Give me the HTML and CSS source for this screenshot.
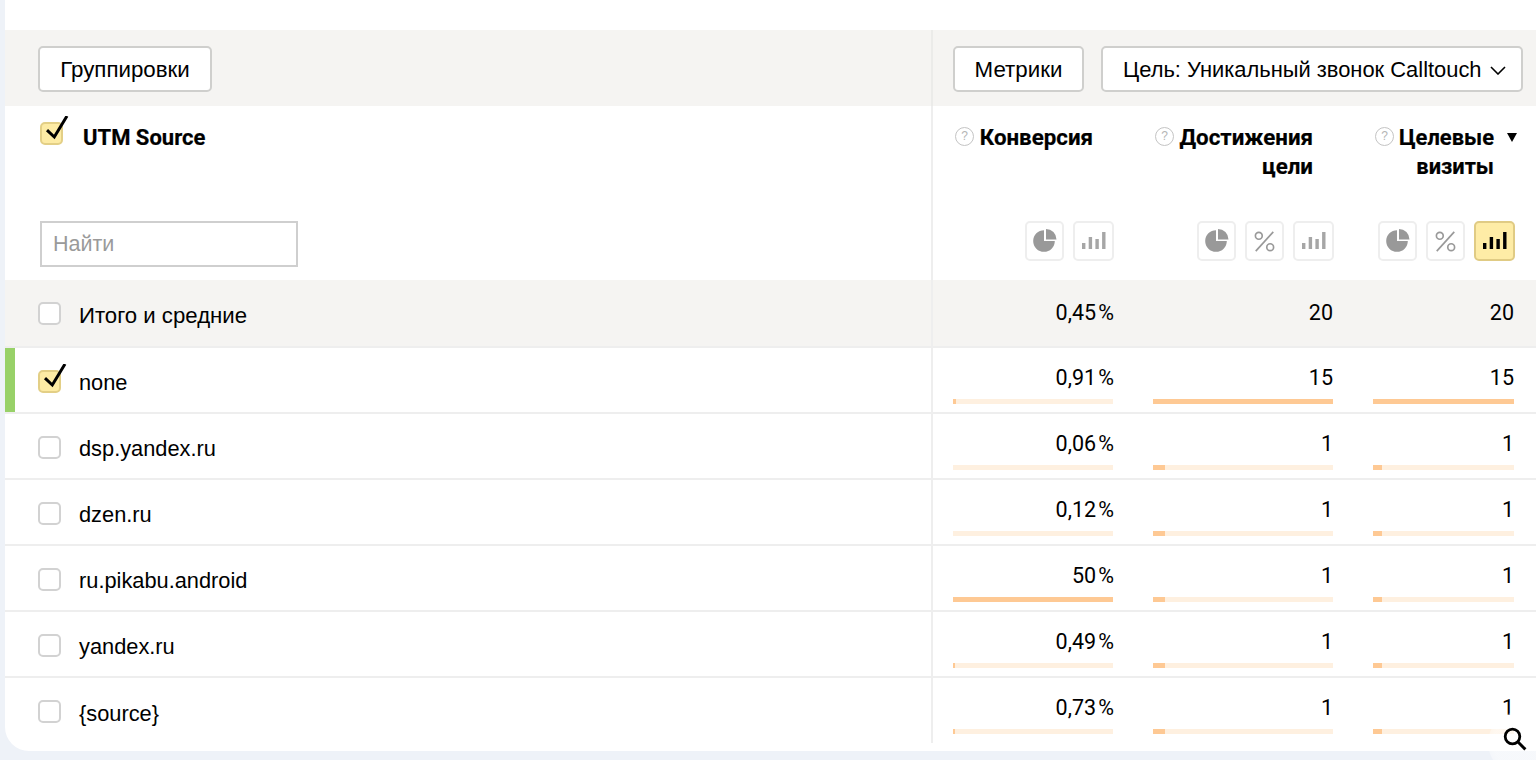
FILE: index.html
```html
<!DOCTYPE html>
<html lang="ru">
  <head>
    <meta charset="UTF-8" />
    <meta name="viewport" content="width=device-width, initial-scale=1.0" />
    <title>UTM Source</title>
    <link rel="stylesheet" href="styles.css">
  </head>
  <body>
    <svg class="sprite" aria-hidden="true">
      <symbol id="pie" viewBox="0 0 24 24">
        <path d="M11 1.2V12h10.8A10.8 10.8 0 1 1 11 1.2z" fill="currentColor" />
        <path d="M13 0a10.5 10.5 0 0 1 10.5 10.5H13z" fill="currentColor" />
      </symbol>
      <symbol id="percent" viewBox="0 0 24 24">
        <circle cx="5.5" cy="5.5" r="3.9" fill="none" stroke="currentColor" stroke-width="1.9" />
        <circle cx="18.5" cy="18.5" r="3.9" fill="none" stroke="currentColor" stroke-width="1.9" />
        <path d="M22 1 2 23" fill="none" stroke="currentColor" stroke-width="1.9" />
      </symbol>
      <symbol id="bars" viewBox="0 0 24 18">
        <rect x="0" y="11" width="3.4" height="6" fill="currentColor" />
        <rect x="6.7" y="5" width="3.4" height="12" fill="currentColor" />
        <rect x="13.4" y="7" width="3.4" height="10" fill="currentColor" />
        <rect x="20.1" y="0" width="3.4" height="17" fill="currentColor" />
      </symbol>
      <symbol id="check" viewBox="0 0 30 30">
        <path d="M7 14.2l7.3 6.8L27 0" fill="none" stroke="currentColor" stroke-width="3" />
      </symbol>
    </svg>

    <div class="report">
      <div class="toolbar">
        <div class="toolbar-left">
          <button class="btn btn-wide">Группировки</button>
        </div>
        <div class="toolbar-right">
          <button class="btn btn-metrics">Метрики</button>
          <button class="btn btn-select">
            Цель: Уникальный звонок Calltouch
            <svg class="chevron" viewBox="0 0 16 9"><path d="M1 1l7 7 7-7" fill="none" stroke="currentColor" stroke-width="1.6" /></svg>
          </button>
        </div>
      </div>

      <div class="row head">
        <div class="name-head">
          <div class="name-title">
            <span class="box checked"><svg class="tick"><use href="#check" /></svg></span>
            <b class="title">UTM Source</b>
          </div>
          <input class="search" type="text" placeholder="Найти" />
        </div>
        <div class="cell metric-head">
          <div class="metric-title">
            <span class="help">?</span>
            <b class="title">Конверсия</b>
          </div>
          <div class="charts">
            <span class="chart"><svg class="icon-pie"><use href="#pie" /></svg></span>
            <span class="chart chart-bars"><svg class="icon-bars"><use href="#bars" /></svg></span>
          </div>
        </div>
        <div class="cell metric-head">
          <div class="metric-title">
            <span class="help">?</span>
            <b class="title">Достижения цели</b>
          </div>
          <div class="charts">
            <span class="chart"><svg class="icon-pie"><use href="#pie" /></svg></span>
            <span class="chart"><svg class="icon-percent"><use href="#percent" /></svg></span>
            <span class="chart chart-bars"><svg class="icon-bars"><use href="#bars" /></svg></span>
          </div>
        </div>
        <div class="cell metric-head">
          <div class="metric-title">
            <span class="help">?</span>
            <b class="title title-short">Целевые визиты</b>
            <svg class="sort" viewBox="0 0 10 9"><path d="M0 0h10L5 9z" fill="currentColor" /></svg>
          </div>
          <div class="charts">
            <span class="chart"><svg class="icon-pie"><use href="#pie" /></svg></span>
            <span class="chart"><svg class="icon-percent"><use href="#percent" /></svg></span>
            <span class="chart chart-bars active"><svg class="icon-bars"><use href="#bars" /></svg></span>
          </div>
        </div>
      </div>

      <div class="row total">
        <div class="name"><span class="box"></span><span class="label">Итого и средние</span></div>
        <div class="cell"><div class="value">0,45&#8202;%</div></div>
        <div class="cell"><div class="value">20</div></div>
        <div class="cell"><div class="value">20</div></div>
      </div>

      <div class="row">
        <div class="name marked"><span class="box checked"><svg class="tick"><use href="#check" /></svg></span><span class="label">none</span></div>
        <div class="cell"><div class="value">0,91&#8202;%</div><div class="bar"><i style="width: 1.8%"></i></div></div>
        <div class="cell"><div class="value">15</div><div class="bar"><i style="width: 100%"></i></div></div>
        <div class="cell"><div class="value">15</div><div class="bar"><i style="width: 100%"></i></div></div>
      </div>
      <div class="row">
        <div class="name"><span class="box"></span><span class="label">dsp.yandex.ru</span></div>
        <div class="cell"><div class="value">0,06&#8202;%</div><div class="bar"><i style="width: 0"></i></div></div>
        <div class="cell"><div class="value">1</div><div class="bar"><i style="width: 6.67%"></i></div></div>
        <div class="cell"><div class="value">1</div><div class="bar"><i style="width: 6.67%"></i></div></div>
      </div>
      <div class="row">
        <div class="name"><span class="box"></span><span class="label">dzen.ru</span></div>
        <div class="cell"><div class="value">0,12&#8202;%</div><div class="bar"><i style="width: 0"></i></div></div>
        <div class="cell"><div class="value">1</div><div class="bar"><i style="width: 6.67%"></i></div></div>
        <div class="cell"><div class="value">1</div><div class="bar"><i style="width: 6.67%"></i></div></div>
      </div>
      <div class="row">
        <div class="name"><span class="box"></span><span class="label">ru.pikabu.android</span></div>
        <div class="cell"><div class="value">50&#8202;%</div><div class="bar"><i style="width: 100%"></i></div></div>
        <div class="cell"><div class="value">1</div><div class="bar"><i style="width: 6.67%"></i></div></div>
        <div class="cell"><div class="value">1</div><div class="bar"><i style="width: 6.67%"></i></div></div>
      </div>
      <div class="row">
        <div class="name"><span class="box"></span><span class="label">yandex.ru</span></div>
        <div class="cell"><div class="value">0,49&#8202;%</div><div class="bar"><i style="width: 0.98%"></i></div></div>
        <div class="cell"><div class="value">1</div><div class="bar"><i style="width: 6.67%"></i></div></div>
        <div class="cell"><div class="value">1</div><div class="bar"><i style="width: 6.67%"></i></div></div>
      </div>
      <div class="row last">
        <div class="name"><span class="box"></span><span class="label">{source}</span></div>
        <div class="cell"><div class="value">0,73&#8202;%</div><div class="bar"><i style="width: 1.46%"></i></div></div>
        <div class="cell"><div class="value">1</div><div class="bar"><i style="width: 6.67%"></i></div></div>
        <div class="cell"><div class="value">1</div><div class="bar"><i style="width: 6.67%"></i></div></div>
      </div>
    </div>

    <div class="zoom-glow"></div>
    <svg class="zoom-icon" viewBox="0 0 24 24">
      <circle cx="9.5" cy="9.5" r="7.3" fill="none" stroke="currentColor" stroke-width="2.8" />
      <path d="M14.8 14.8l7.6 7.6" fill="none" stroke="currentColor" stroke-width="3" />
    </svg>
  </body>
</html>
```

FILE: styles.css
```css
* {
  box-sizing: border-box;
}

body {
  margin: 0;
  height: 760px;
  overflow: hidden;
  position: relative;
  background-color: #eef2f8;
  color: #000;
  font-family: "Liberation Sans", Arial, sans-serif;
  font-size: 22px;
}

.sprite {
  display: none;
}

.report {
  margin-left: 5px;
  height: 751px;
  padding-top: 30px;
  background-color: #fff;
  border-bottom-left-radius: 24px;
}

/* toolbar */
.toolbar {
  display: grid;
  grid-template-columns: 928px 1fr;
  height: 76px;
  background-color: #f5f4f2;
}

.toolbar-left {
  display: flex;
  align-items: center;
  padding: 2px 0 0 33px;
  border-right: 2px solid #ebebe9;
}

.toolbar-right {
  display: flex;
  align-items: center;
  gap: 17px;
  padding: 2px 0 0 20px;
}

.btn {
  height: 46px;
  padding: 2px 20px 0;
  background-color: #fff;
  border: 2px solid #cfcfcd;
  border-radius: 5px;
  color: #000;
  font-family: inherit;
  font-size: 22.3px;
  white-space: nowrap;
}

.btn-wide {
  width: 174px;
}

.btn-metrics {
  width: 131px;
  padding: 2px 0 0;
}

.btn-select {
  display: flex;
  align-items: center;
  gap: 8px;
  width: 422px;
  padding-right: 0;
  font-size: 21.9px;
}

.chevron {
  flex: none;
  width: 16px;
  height: 9px;
}

/* rows */
.row {
  display: grid;
  grid-template-columns: 928px 220px 220px 163px;
  height: 66px;
  border-bottom: 2px solid #eeeeee;
}

.row.last {
  height: 65px;
  border-bottom: 0;
}

.row.total {
  height: 68px;
  background-color: #f5f4f2;
}

.row.head {
  height: 174px;
  border-bottom: 0;
}

.name {
  display: flex;
  align-items: center;
  gap: 18px;
  padding: 2px 0 0 33px;
  border-right: 2px solid #eeeeee;
}

.total .name {
  padding-top: 0;
}

.marked {
  box-shadow: inset 10px 0 0 #98d168;
}

.label {
  font-size: 21.8px;
  position: relative;
  top: 2px;
}

.total .label {
  top: 3px;
  font-size: 22.2px;
}

.box {
  position: relative;
  flex: none;
  width: 23px;
  height: 23px;
  background-color: #fff;
  border: 2px solid #d2d2d2;
  border-radius: 5px;
}

.box.checked {
  background-color: #fdeba4;
  border-color: #e3cf86;
}

.tick {
  position: absolute;
  left: -2px;
  top: -2px;
  width: 30px;
  height: 30px;
  margin-top: -6px;
  overflow: visible;
  color: #000;
}

.cell {
  padding: 15px 40px 0 20px;
  font-family: "Roboto", sans-serif;
}

.cell + .cell {
  padding-left: 0;
}

.cell:last-child {
  padding-right: 22px;
}

.total .cell {
  padding-top: 18px;
}

.value {
  height: 29px;
  line-height: 29px;
  text-align: right;
  font-size: 21.5px;
}

.name + .cell .value {
  margin-right: -1px;
}

.bar {
  height: 5px;
  margin-top: 7px;
  background-color: #fef0e0;
}

.bar i {
  display: block;
  height: 5px;
  background-color: #fec994;
}

/* table head */
.name-head {
  display: flex;
  flex-direction: column;
  justify-content: space-between;
  padding: 16px 0 13px 35px;
  border-right: 2px solid #eeeeee;
}

.name-title {
  display: flex;
  gap: 20px;
}

.name-title .title {
  margin-top: 1px;
  font-size: 22px;
}

.search {
  width: 258px;
  height: 46px;
  padding: 0 11px;
  border: 2px solid #cfcfcf;
  border-radius: 0;
  font-family: inherit;
  font-size: 21.5px;
}

.search::placeholder {
  color: #9a9a9a;
}

.metric-head {
  display: flex;
  flex-direction: column;
  justify-content: space-between;
  padding-top: 17px;
  padding-bottom: 19px;
}

.metric-title {
  display: flex;
  align-items: flex-start;
}

.title {
  font-family: "Roboto", sans-serif;
  font-size: 22.3px;
  font-weight: 700;
  line-height: 29px;
  -webkit-text-stroke: 0.2px #000;
}

.metric-title .title {
  flex: 1;
  margin-right: 20px;
  text-align: right;
}

.metric-title .title-short {
  margin-right: 0;
  padding-left: 4px;
  font-size: 21.9px;
}

.help {
  flex: none;
  width: 19px;
  height: 19px;
  margin: 4px 0 0 2px;
  border: 1.5px solid #c4c4c4;
  border-radius: 50%;
  color: #b5b5b5;
  font-family: "Liberation Sans", sans-serif;
  font-size: 12px;
  line-height: 16px;
  text-align: center;
}

.sort {
  flex: none;
  width: 10px;
  height: 9px;
  margin: 10px -3px 0 13px;
}

.charts {
  display: flex;
  justify-content: flex-end;
  gap: 9px;
  margin-right: -1px;
}

.chart {
  display: flex;
  align-items: center;
  justify-content: center;
  width: 39px;
  height: 40px;
  border: 2px solid #eeeeee;
  border-radius: 5px;
  color: #999;
}

.chart-bars {
  width: 41px;
  padding-left: 1px;
  color: #a6a6a6;
}

.chart.active {
  background-color: #feeca6;
  border-color: #e0cb84;
  color: #000;
}

.icon-pie {
  width: 24px;
  height: 24px;
}

.icon-percent {
  width: 21px;
  height: 21px;
}

.icon-bars {
  width: 24px;
  height: 18px;
}

/* magnifier cursor over the corner */
.zoom-glow {
  position: absolute;
  left: 1488px;
  top: 712px;
  width: 62px;
  height: 62px;
  border-radius: 50%;
  background: radial-gradient(circle, rgba(255, 255, 255, 0.5) 60%, rgba(255, 255, 255, 0) 100%);
}

.zoom-icon {
  position: absolute;
  left: 1503px;
  top: 727px;
  width: 24px;
  height: 24px;
  color: #000;
}
```
